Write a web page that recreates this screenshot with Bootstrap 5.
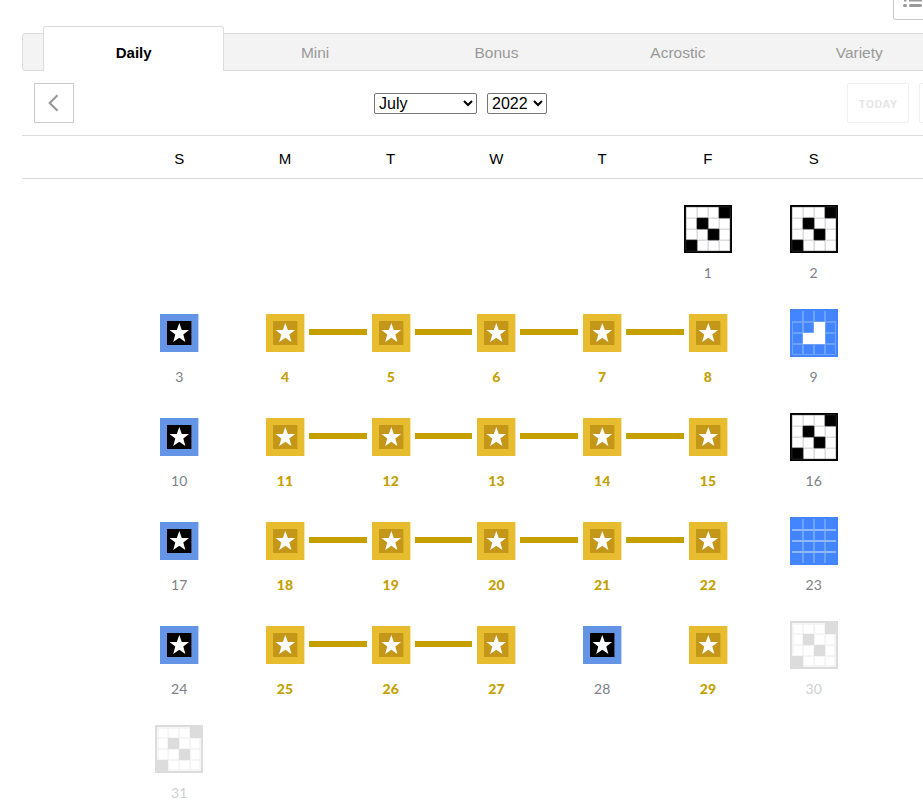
<!DOCTYPE html>
<html lang="en">
<head>
<meta charset="utf-8">
<title>Crossword archive</title>
<link href="https://cdn.jsdelivr.net/npm/bootstrap@5.3.0/dist/css/bootstrap.min.css" rel="stylesheet">
<style>
body{font-family:"Liberation Sans",Arial,sans-serif;font-size:15px;line-height:20px;color:#000;background:#fff;height:801px;overflow:hidden}
.archive{width:949px;margin-left:22px}
.view-row{height:33px}
.view-btn{width:67px;height:20px;border:1px solid #ccc;border-top:0;border-radius:0 0 3px 3px;margin-right:11px;padding-left:9px}
.tabbar{height:38px;background:#f3f3f3;border:1px solid #dcdcdc;border-radius:3px;padding:0 20px}
.tabbar .nav-link{flex:0 0 20%;height:36px;padding:9px 0;color:#999;border:0;font-size:15.5px;line-height:20px}
.tabbar .nav-link.active{height:45px;margin-top:-8px;padding:16px 0 8px;background:#fff;color:#000;border:1px solid #dcdcdc;border-bottom:0;border-radius:3px 3px 0 0;font-size:15px}
.tools{height:65px;border-bottom:1px solid #dcdcdc;padding:0 12px}
.tools>div{width:33.333%}
.pick{padding-right:72px}
.pick select+select{margin-left:10px}
.sq{width:40px;height:40px;border:1px solid #ccc;background:#fff;padding:0}
.faint{border-color:#efefef;border-radius:2px}
.today{width:62px;font:bold 11px "Open Sans",sans-serif;color:#e6e6e6;margin-right:10px}
select{font:16px "Liberation Sans",Arial,sans-serif;color:#000;background:#fff;height:21px;border:1px solid #767676;border-radius:2px;padding:0}
.month{width:103px}.year{width:60px}
.heads{height:43px;border-bottom:1px solid #dcdcdc;padding-top:3px}
.cal{width:740.2px;margin-left:104.35px;display:grid;grid-template-columns:repeat(7,1fr)}
.cell{height:104px;padding-top:26px;position:relative}
.cell svg{display:block;width:48px;height:48px}
.num{font:400 14px/20px Lato,sans-serif;color:#7d7f88;margin-top:10px}
.gold .num{font-weight:900;color:#c4a000}
.off .num{color:#cfcfd3}
.streak::after{content:"";position:absolute;left:calc(50% + 24px);top:46px;width:57.75px;height:6px;background:#c4a000}
</style>
<script src="https://cdn.jsdelivr.net/npm/bootstrap@5.3.0/dist/js/bootstrap.bundle.min.js"></script>
</head>
<body>
<svg class="d-none" xmlns="http://www.w3.org/2000/svg">
<symbol id="blank" viewBox="0 0 48 48"><path fill="#000" d="M0 0h48v48H0z"/><path fill="#fff" d="M2 2h44v44H2z"/><path stroke="#dcdce0" stroke-width="1.6" fill="none" d="M13.2 2v44M24.2 2v44M35.2 2v44M2 13.2h44M2 24.2h44M2 35.2h44"/><path stroke="#aaa" stroke-width=".6" fill="none" d="M2.3 2.3h43.4v43.4H2.3z"/><path d="M35 2h11v11H35zM13 13h11v11H13zM24 24h11v11H24zM2 35h11v11H2z" stroke="#222" stroke-width=".7"/></symbol>
<symbol id="off" viewBox="0 0 48 48"><path fill="#dcdcdc" d="M0 0h48v48H0z"/><path fill="#fff" d="M2 2h44v44H2z"/><path stroke="#f4f4f4" stroke-width="1.8" fill="none" d="M13.2 2v44M24.2 2v44M35.2 2v44M2 13.2h44M2 24.2h44M2 35.2h44M2.8 2.8h42.4v42.4H2.8z"/><path fill="#dcdcdc" d="M35 2h11v11H35zM13 13h11v11H13zM24 24h11v11H24zM2 35h11v11H2z"/></symbol>
<symbol id="part" viewBox="0 0 48 48"><path fill="#4285ff" d="M0 0h48v48H0z"/><path stroke="#79a9ff" stroke-width="1.6" fill="none" d="M13 2v44M24 2v44M35 2v44M2 13h44M2 24h44M2 35h44"/><path stroke="#6fa2ff" fill="none" d="M2.5 13v32.5h43V13"/><path fill="#fff" d="M24 13h11v22H13V24h11z"/></symbol>
<symbol id="done" viewBox="0 0 48 48"><path fill="#4285ff" d="M0 0h48v48H0z"/><path stroke="#79a9ff" stroke-width="1.6" fill="none" d="M13 2v44M24 2v44M35 2v44"/><path stroke="#8fb8ff" stroke-width="1.8" fill="none" d="M2 13h44M2 24h44M2 35h44"/></symbol>
<symbol id="blue" viewBox="0 0 48 48"><path fill="#6494e6" d="M5 5h38.400v38H5z"/><path fill="#000" d="M12 12h24.400v24H12z"/><path fill="#fff" d="m24.300 14 2.500 6.900 7.300.2-5.800 4.500 2.100 7.300-6.100-4.200-6.100 4.200 2.100-7.300-5.800-4.500 7.300-.2z"/></symbol>
<symbol id="gold" viewBox="0 0 48 48"><path fill="#e7bc2e" d="M5 5h38.400v38H5z"/><path fill="#c59718" d="M12 12h24.400v24H12z"/><path fill="#fff" d="m24.300 14 2.500 6.900 7.300.2-5.800 4.500 2.100 7.300-6.100-4.200-6.100 4.200 2.100-7.300-5.800-4.500 7.300-.2z"/></symbol>
</svg>
<main class="archive">
  <div class="view-row d-flex justify-content-end align-items-start">
    <div class="view-btn"><svg class="d-block" width="46" height="8"><path fill="#999" d="M1 0h2.500v1.500H1zM6 0h13v1.500H6z"/><rect y="4" width="4" height="3" rx="1.5" fill="#999"/><rect x="6" y="4" width="13" height="3" rx="1.5" fill="#999"/></svg></div>
  </div>
  <nav class="tabbar nav text-center flex-nowrap">
    <a class="nav-link active fw-bold" href="#">Daily</a>
    <a class="nav-link" href="#">Mini</a>
    <a class="nav-link" href="#">Bonus</a>
    <a class="nav-link" href="#">Acrostic</a>
    <a class="nav-link" href="#">Variety</a>
  </nav>
  <div class="tools d-flex align-items-center">
    <div><button class="sq d-flex align-items-center justify-content-center" aria-label="Previous month"><svg width="14" height="18" viewBox="0 0 14 18" fill="none" stroke="#999" stroke-width="2.2"><path d="M10.500 1.200 2.700 9l7.800 7.800"/></svg></button></div>
    <div class="pick d-flex justify-content-center align-items-center">
      <select class="month" aria-label="Month"><option>July</option></select>
      <select class="year" aria-label="Year"><option>2022</option></select>
    </div>
    <div class="d-flex justify-content-end">
      <button class="sq faint today">TODAY</button>
      <button class="sq faint" aria-label="Next month"></button>
    </div>
  </div>
  <div class="heads"><div class="cal text-center h-100 align-items-center"><span>S</span><span>M</span><span>T</span><span>W</span><span>T</span><span>F</span><span>S</span></div></div>
  <div class="cal" id="days"></div>
</main>
<script>
const kinds = {1:'blank',2:'blank',9:'part',16:'blank',23:'done',30:'off',31:'off',3:'blue',10:'blue',17:'blue',24:'blue',28:'blue'};
let html = '<div class="cell"></div>'.repeat(5);
for (let d = 1; d <= 31; d++) {
  const kind = kinds[d] || 'gold';
  const next = kinds[d + 1] || 'gold';
  const streak = kind === 'gold' && next === 'gold' ? ' streak' : '';
  html += `<div class="cell d-flex flex-column align-items-center ${kind}${streak}"><svg><use href="#${kind}"/></svg><div class="num">${d}</div></div>`;
}
document.getElementById('days').innerHTML = html;
</script>
</body>
</html>
